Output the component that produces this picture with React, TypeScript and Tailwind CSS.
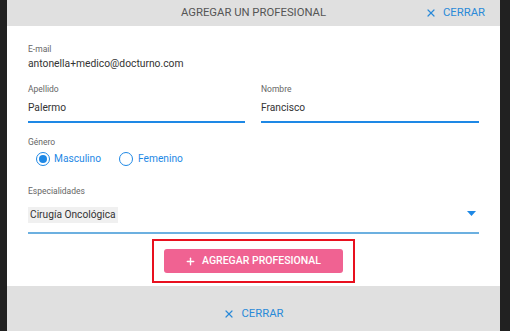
import { X, Plus } from 'lucide-react'

export default function App() {
  return (
    <div className="flex h-[331px] w-[510px] overflow-hidden bg-[#212121]" style={{ fontFamily: 'Roboto, "Liberation Sans", sans-serif' }}>
      <div className="w-[7px] shrink-0" />
      <div className="flex h-[331px] w-[493px] flex-col bg-white">
        {/* header */}
        <div className="relative flex h-[26px] shrink-0 items-center justify-center bg-[#e0e0e0]">
          <span className="text-[11.3px] leading-[14px] text-[#555]">AGREGAR UN PROFESIONAL</span>
          <button className="absolute right-[15px] top-[6px] flex items-center gap-[6px] text-[11.3px] leading-[14px] text-[#2a8ad8]">
            <X size={12} strokeWidth={2.4} />
            CERRAR
          </button>
        </div>

        {/* body */}
        <div className="flex min-h-0 flex-1 flex-col px-[21px] pt-[17px]">
          <div className="text-[8.5px] leading-[12px] text-[#666]">E-mail</div>
          <div className="mt-[1px] text-[10.3px] leading-[16px] text-[#333]">antonella+medico@docturno.com</div>

          <div className="mt-[11px] flex gap-[16px]">
            <div className="w-[217px]">
              <div className="text-[8.5px] leading-[12px] text-[#666]">Apellido</div>
              <div className="mt-[5px] text-[10.2px] leading-[16px] text-[#333]">Palermo</div>
              <div className="mt-[5px] h-[2px] bg-[#1e88e5]" />
            </div>
            <div className="w-[218px]">
              <div className="text-[8.5px] leading-[12px] text-[#666]">Nombre</div>
              <div className="mt-[5px] text-[10.2px] leading-[16px] text-[#333]">Francisco</div>
              <div className="mt-[5px] h-[2px] bg-[#1e88e5]" />
            </div>
          </div>

          <div className="mt-[13px] text-[8.5px] leading-[12px] text-[#666]">Género</div>
          <div className="mt-[3px] flex h-[16px] items-center gap-[18px] pl-[8px]">
            <label className="flex items-center gap-[4px] text-[10.2px] leading-[16px] text-[#1e88e5]">
              <span className="flex h-[14px] w-[14px] items-center justify-center rounded-full border-[1.5px] border-[#1e88e5]">
                <span className="h-[8px] w-[8px] rounded-full bg-[#1e88e5]" />
              </span>
              Masculino
            </label>
            <label className="flex items-center gap-[5px] text-[10.2px] leading-[16px] text-[#1e88e5]">
              <span className="h-[14px] w-[14px] rounded-full border-[1.5px] border-[#1e88e5]" />
              Femenino
            </label>
          </div>

          <div className="mt-[18px] text-[8.5px] leading-[12px] text-[#666]">Especialidades</div>
          <div className="mt-[10px] flex h-[16px] w-[451px] items-center justify-between">
            <span className="h-[16px] bg-[#f0f0f0] px-[2px] text-[10.2px] leading-[16px] text-[#333]">Cirugía Oncológica</span>
            <svg width="9" height="5" viewBox="0 0 9 5" className="mb-[4px] mr-[3px]">
              <path d="M0 0h9L4.5 5z" fill="#1e88e5" />
            </svg>
          </div>
          <div className="mt-[9px] h-[2px] w-[451px] bg-[#6cb0e0]" />

          <div className="mt-[5px] flex justify-center">
            <div className="ml-[-1px] border-2 border-[#e8101e] px-[10px] py-[8px]">
              <button className="flex h-[24px] w-[179px] items-center justify-center gap-[6px] rounded-[3px] bg-[#f06292] text-[10.5px] font-medium text-white">
                <Plus size={11} strokeWidth={3} />
                AGREGAR PROFESIONAL
              </button>
            </div>
          </div>
        </div>

        {/* footer */}
        <div className="flex h-[45px] shrink-0 items-start justify-center bg-[#e0e0e0] pt-[21px]">
          <button className="flex items-center gap-[6px] text-[11.3px] leading-[14px] text-[#2a8ad8]">
            <X size={12} strokeWidth={2.4} />
            CERRAR
          </button>
        </div>
      </div>
    </div>
  )
}
